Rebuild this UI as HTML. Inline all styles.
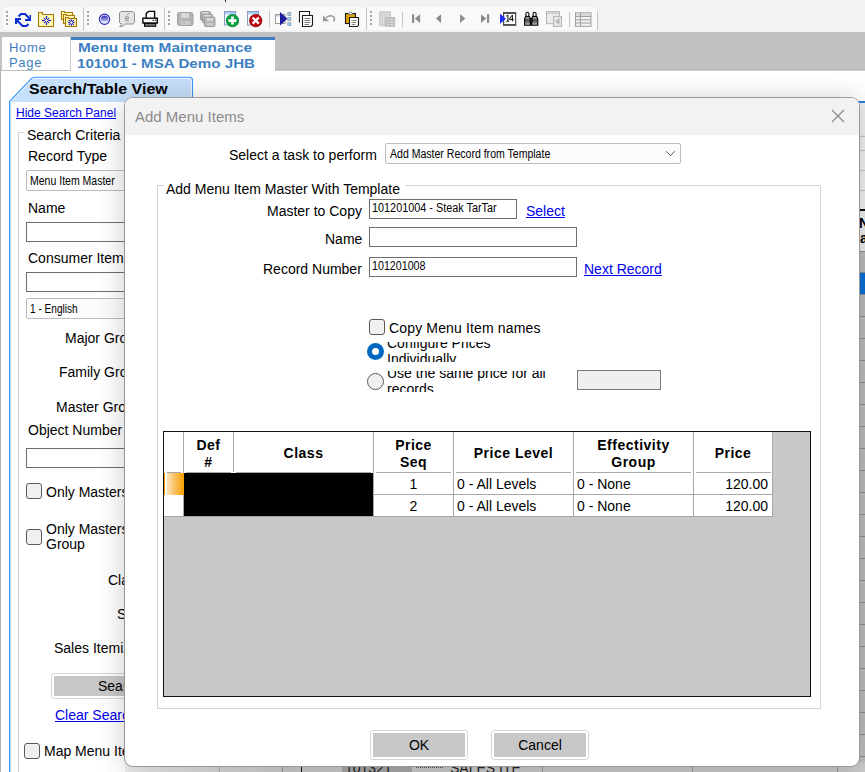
<!DOCTYPE html>
<html><head><meta charset="utf-8">
<style>
*{box-sizing:border-box}
html,body{margin:0;padding:0}
body{width:865px;height:772px;overflow:hidden;position:relative;background:#fff;font-family:"Liberation Sans",sans-serif;color:#000}
.a{position:absolute}
.t{position:absolute;white-space:pre;line-height:1}
.lnk{color:#0000ee;text-decoration:underline}
/* toolbar */
#tb{left:0;top:0;width:865px;height:32px;background:#f2f2f2}
.grp{position:absolute;top:7px;height:23px;background:#f9f9f9;border-radius:3px}
.grip{position:absolute;top:11px;width:3px;height:14px;background:radial-gradient(circle at 1.5px 1.5px,#9a9a9a 1.1px,transparent 1.3px) 0 0/3px 3.8px}
.sep{position:absolute;top:9px;width:1px;height:20px;background:#c8c8c8}
#band{left:0;top:32px;width:865px;height:39px;background:linear-gradient(#c2c2c2 0 37px,#b9b9b9 37px 38px,#d0d0d0 38px)}
/* modal */
#modal{left:124px;top:97px;width:736px;height:670px;background:#fff;border:1px solid #999;border-radius:9px;overflow:hidden;box-shadow:0 3px 30px rgba(0,0,0,.2)}
.cb{width:16px;height:16px;border:1px solid #5a5a5a;border-radius:3px;background:#f0f0f0}
.inp{height:20px;border:1px solid #6e6e6e;background:#fff}
.hl{position:absolute;height:1px;background:#a8a8a8}
.vl{position:absolute;width:1px;background:#a8a8a8}
.th{position:absolute;font-size:14px;font-weight:bold;text-align:center;line-height:16.5px;letter-spacing:.5px}
.td{position:absolute;font-size:14px;line-height:1;white-space:pre}
.btn{width:98px;height:30px;border:1px solid #d6d6d6;border-radius:3px;background:#fff;padding:2px}
.btn div{width:100%;height:100%;background:#c8c8c8}
.sx{transform-origin:0 0}
</style></head>
<body>
<!-- toolbar -->
<div id="tb" class="a">
  <div class="grp" style="left:3px;width:80px"></div>
  <div class="grp" style="left:84px;width:80px"></div>
  <div class="grp" style="left:165px;width:201px"></div>
  <div class="grp" style="left:366px;width:231px"></div>
<svg class="a" style="left:0;top:0" width="600" height="32" viewBox="0 0 600 32" shape-rendering="geometricPrecision">
<defs>
<linearGradient id="gc" x1="0" y1="0" x2="0" y2="1"><stop offset="0" stop-color="#2e2eb8"/><stop offset=".55" stop-color="#8c8ce0"/><stop offset="1" stop-color="#ffffff"/></linearGradient>
<linearGradient id="gb" x1="0" y1="0" x2="0" y2="1"><stop offset="0" stop-color="#888"/><stop offset="1" stop-color="#333"/></linearGradient>
</defs>
<!-- grips -->
<g fill="#a4a4a4">
<rect x="6" y="11" width="2" height="2"/><rect x="6" y="15" width="2" height="2"/><rect x="6" y="19" width="2" height="2"/><rect x="6" y="23" width="2" height="2"/>
<rect x="87" y="11" width="2" height="2"/><rect x="87" y="15" width="2" height="2"/><rect x="87" y="19" width="2" height="2"/><rect x="87" y="23" width="2" height="2"/>
<rect x="168" y="11" width="2" height="2"/><rect x="168" y="15" width="2" height="2"/><rect x="168" y="19" width="2" height="2"/><rect x="168" y="23" width="2" height="2"/>
<rect x="370" y="11" width="2" height="2"/><rect x="370" y="15" width="2" height="2"/><rect x="370" y="19" width="2" height="2"/><rect x="370" y="23" width="2" height="2"/>
</g>
<!-- separators -->
<g fill="#c4c4c4">
<rect x="83" y="8" width="1" height="22"/><rect x="164" y="8" width="1" height="22"/><rect x="269" y="11" width="1" height="16"/>
<rect x="366" y="8" width="1" height="22"/><rect x="402" y="12" width="1" height="15"/><rect x="569" y="12" width="1" height="15"/><rect x="597" y="11" width="1" height="19"/>
</g>
<!-- 1 refresh -->
<g stroke="#0a2fd6" stroke-width="2" fill="none" stroke-linejoin="miter">
<path d="M18.5 16.5L21 14H25L29 18"/>
<path d="M17.5 21L22.5 26H26.5L28.5 24"/>
</g>
<g fill="#0a2fd6"><path d="M29.5 15H31V21H25V19H27.5L28 18.2L29.5 18Z"/><path d="M15 18H21V20H18.5L19.5 21.2L17 22.5V24H15Z"/></g>
<!-- 2 folder -->
<path d="M38.5 12.5H42.5V14.5H53.5V26.5H38.5Z" fill="#fff8b0" stroke="#a87800" stroke-width="1.1"/>
<g fill="#1414d8"><rect x="45.9" y="16.0" width="1.2" height="2.8"/><rect x="45.9" y="22.2" width="1.2" height="2.8"/><rect x="42.0" y="19.9" width="2.8" height="1.2"/><rect x="48.2" y="19.9" width="2.8" height="1.2"/><rect x="43.9" y="17.9" width="1.2" height="1.2"/><rect x="45.0" y="19.0" width="1" height="1"/><rect x="43.9" y="21.9" width="1.2" height="1.2"/><rect x="45.0" y="21.0" width="1" height="1"/><rect x="47.9" y="17.9" width="1.2" height="1.2"/><rect x="47.0" y="19.0" width="1" height="1"/><rect x="47.9" y="21.9" width="1.2" height="1.2"/><rect x="47.0" y="21.0" width="1" height="1"/></g>
<!-- 3 folders -->
<path d="M61.5 11.5H64.5V12.5H72.5V19.5H61.5Z" fill="#fff8b0" stroke="#a87800" stroke-width="1.1"/>
<path d="M63.5 14.5H66.5V15.5H74.5V23.5H63.5Z" fill="#fff8b0" stroke="#a87800" stroke-width="1.1"/>
<path d="M65.5 17.5H68.5V18.5H76.5V26.5H65.5Z" fill="#fff8b0" stroke="#a87800" stroke-width="1.1"/>
<g fill="#1414d8"><rect x="70.7" y="19.3" width="1.2" height="1.8"/><rect x="70.7" y="23.9" width="1.2" height="1.8"/><rect x="68.1" y="21.9" width="1.8" height="1.2"/><rect x="72.7" y="21.9" width="1.8" height="1.2"/><rect x="68.7" y="19.9" width="1.2" height="1.2"/><rect x="69.8" y="21.0" width="1" height="1"/><rect x="68.7" y="23.9" width="1.2" height="1.2"/><rect x="69.8" y="23.0" width="1" height="1"/><rect x="72.7" y="19.9" width="1.2" height="1.2"/><rect x="71.8" y="21.0" width="1" height="1"/><rect x="72.7" y="23.9" width="1.2" height="1.2"/><rect x="71.8" y="23.0" width="1" height="1"/></g>
<!-- 4 circle -->
<circle cx="104.5" cy="19.2" r="5.1" fill="#fff" stroke="#2a2ac6" stroke-width="1.2"/><circle cx="104.5" cy="19.2" r="3.7" fill="url(#gc)"/>
<!-- 5 speech bubble -->
<path d="M121 11.5H133L134.5 13V22.5L133 24H125.2L122.4 26.6H119.6L122 24H121L119.5 22.5V13Z" fill="#e4e4e4" stroke="#8e8e8e" stroke-width="1"/>
<path d="M125.6 18.6H128.6V17.6Q128.6 16.6 127.6 16.6H126.6Q125.6 16.6 125.6 17.6V19.8Q125.6 20.6 126.6 20.6H128.8" fill="none" stroke="#8a8a8a" stroke-width="1"/>
<path d="M127.2 14.9L128.9 13.2" stroke="#8a8a8a" stroke-width="1"/>
<!-- 6 printer -->
<path d="M146.2 17.8V13.6L148.6 11.4H154.6V17.8" fill="#fff" stroke="#000" stroke-width="1.4"/>
<rect x="142.9" y="18.2" width="14.4" height="4.8" fill="#fff" stroke="#000" stroke-width="1.4"/>
<rect x="144.4" y="19.4" width="7" height=".8" fill="#e0e0e0"/>
<rect x="144.5" y="23.6" width="11.2" height="2.7" fill="#7a7a7a" stroke="#000" stroke-width="1"/>
<rect x="152.6" y="19.7" width="1.2" height="1.2" fill="#000"/><rect x="154.8" y="19.7" width="1.2" height="1.2" fill="#000"/>
<!-- 7 save -->
<rect x="177.5" y="12.5" width="15.5" height="13" rx="2" fill="#b4b4b4" stroke="#a0a0a0"/>
<rect x="181" y="13" width="8" height="5" fill="#d8d8d8"/>
<rect x="180.5" y="21" width="9.5" height="4" fill="#c8c8c8"/>
<rect x="183.5" y="22.3" width="1.2" height="1.2" fill="#999"/>
<!-- 8 multi save -->
<rect x="200.5" y="11.5" width="10" height="9" rx="1.5" fill="#b4b4b4" stroke="#9c9c9c"/>
<rect x="202.5" y="14" width="10" height="9" rx="1.5" fill="#b4b4b4" stroke="#9c9c9c"/>
<rect x="204.5" y="17" width="10.5" height="9.5" rx="1.5" fill="#b4b4b4" stroke="#9c9c9c"/>
<rect x="202.5" y="12" width="6" height="1.5" fill="#ddd"/><rect x="204.5" y="15" width="6" height="1.5" fill="#ddd"/>
<rect x="206.5" y="18" width="6.5" height="3" fill="#d6d6d6"/><rect x="206.5" y="23" width="7" height="3" fill="#c8c8c8"/>
<!-- 9 add -->
<rect x="224.5" y="11.5" width="11" height="13.5" fill="#f4f8ff" stroke="#8a9ab8"/>
<rect x="225" y="12" width="10" height="2.2" fill="#a6d0f4"/>
<circle cx="232.5" cy="20.6" r="6.2" fill="#00a33e" stroke="#057a33" stroke-width=".8"/>
<path d="M232.5 16.6V24.6M228.5 20.6H236.5" stroke="#fff" stroke-width="2.6"/>
<!-- 10 delete -->
<rect x="247.5" y="11.5" width="11" height="13.5" fill="#f4f8ff" stroke="#8a9ab8"/>
<rect x="248" y="12" width="10" height="2.2" fill="#a6d0f4"/>
<circle cx="255.7" cy="20.6" r="6.2" fill="#c0000c" stroke="#8a0000" stroke-width=".8"/>
<path d="M252.6 17.5L258.8 23.7M258.8 17.5L252.6 23.7" stroke="#fff" stroke-width="2.4"/>
<!-- 11 -->
<rect x="275.5" y="14.5" width="9.5" height="9" fill="#fff" stroke="#a09a90"/>
<rect x="276" y="15" width="8.5" height="1.6" fill="#b8d4ee"/>
<rect x="287.8" y="12.6" width="3" height="2.8" fill="#9cd0f8" stroke="#8a9aaa" stroke-width=".8"/>
<rect x="287.8" y="17.6" width="3" height="2.8" fill="#9cd0f8" stroke="#8a9aaa" stroke-width=".8"/>
<rect x="287.8" y="22.6" width="3" height="2.8" fill="#9cd0f8" stroke="#8a9aaa" stroke-width=".8"/>
<path d="M280 12L287.4 18.7L280 25.5Z" fill="#1c1c9c"/>
<!-- 12 copy -->
<path d="M299.5 22.5V11.5H309.5V15" fill="none" stroke="#1a1a1a" stroke-width="1.1"/>
<rect x="300" y="12" width="9" height="3" fill="#fff"/><rect x="300" y="12" width="2.5" height="10" fill="#fff"/>
<path d="M302.5 15.5H312.5V25L311 26.5H302.5Z" fill="#fff" stroke="#1a1a1a" stroke-width="1.1"/>
<path d="M304.5 18.5H310.5M304.5 20.5H310.5M304.5 22.5H310.5M304.5 24.5H309" stroke="#7a7a7a" stroke-width="1"/>
<!-- 13 undo -->
<path d="M326 17.5Q330 14.5 333.5 16.5Q335.5 18.5 333.5 21.5" fill="none" stroke="#9a9a9a" stroke-width="1.4"/>
<path d="M323 15.2V21.2H329Z" fill="#9a9a9a"/>
<!-- 14 paste -->
<rect x="345.5" y="13.5" width="10" height="10" fill="#e0a400" stroke="#1a1a1a" stroke-width="1.1"/>
<path d="M347.8 14.5L350.5 11.6L353.2 14.5Z" fill="#e8e8e8" stroke="#777" stroke-width=".9"/>
<path d="M349.5 17.5H358.5V25.3L357.3 26.5H349.5Z" fill="#fff" stroke="#1a1a1a" stroke-width="1.1"/>
<path d="M351.5 20.5H356.5M351.5 22.5H356.5M351.5 24.5H355.5" stroke="#8a8a8a" stroke-width="1"/>
<!-- 15 gray grid -->
<rect x="379" y="11.2" width="12" height="15" fill="#cdcdcd"/>
<g fill="#ececec"><rect x="380.5" y="13" width="1.3" height="1.3"/><rect x="383" y="13" width="1.3" height="1.3"/><rect x="385.5" y="13" width="1.3" height="1.3"/><rect x="388" y="13" width="1.3" height="1.3"/>
<rect x="380.5" y="15.5" width="1.3" height="1.3"/><rect x="383" y="15.5" width="1.3" height="1.3"/><rect x="385.5" y="15.5" width="1.3" height="1.3"/><rect x="388" y="15.5" width="1.3" height="1.3"/>
<rect x="380.5" y="18" width="1.3" height="1.3"/><rect x="383" y="18" width="1.3" height="1.3"/><rect x="380.5" y="20.5" width="1.3" height="1.3"/><rect x="383" y="20.5" width="1.3" height="1.3"/><rect x="380.5" y="23" width="1.3" height="1.3"/><rect x="383" y="23" width="1.3" height="1.3"/></g>
<rect x="385" y="17" width="10.2" height="9.9" fill="#bfbfbf"/>
<g fill="#e4e4e4"><rect x="387" y="19" width="1.2" height="1.2"/><rect x="387" y="21.5" width="1.2" height="1.2"/><rect x="387" y="24" width="1.2" height="1.2"/></g>
<g stroke="#d8d8d8" stroke-width="1"><path d="M389.5 19.6H393.5M389.5 22.1H393.5M389.5 24.6H393.5"/></g>
<!-- 16-19 nav -->
<g fill="#8c8c8c">
<rect x="412" y="14.2" width="2.2" height="8.7"/><path d="M420.1 14.2L414.8 18.6L420.1 22.9Z"/>
<path d="M441.1 14.2L435.9 18.6L441.1 22.9Z"/>
<path d="M460 14.2L465.4 18.6L460 22.9Z"/>
<path d="M481 14.2L486.3 18.6L481 22.9Z"/><rect x="487" y="14.2" width="2.2" height="8.7"/>
</g>
<!-- 20 calendar -->
<rect x="503.6" y="12.8" width="12" height="12.4" fill="#fff" stroke="#505050" stroke-width="1.2"/>
<rect x="503" y="12.2" width="13.2" height="1.8" fill="#505050"/>
<rect x="503" y="24" width="13.2" height="1.6" fill="#505050"/>
<path d="M506.2 16.2L507.9 15V21.2M506.3 21.2H509.3" fill="none" stroke="#111" stroke-width="1"/>
<path d="M512.4 21.4V15L509.2 19.4H513.8" fill="none" stroke="#111" stroke-width="1"/>
<path d="M500 13.7L506 18.75L500 23.8Z" fill="#1f2ef0"/>
<!-- 21 binoculars -->
<defs><linearGradient id="gb2" x1="0" y1="0" x2="0" y2="1"><stop offset="0" stop-color="#c8c8c8"/><stop offset=".45" stop-color="#4a4a4a"/><stop offset=".75" stop-color="#8a8a8a"/><stop offset="1" stop-color="#bdbdbd"/></linearGradient></defs>
<path d="M524.6 25.2V19L525.6 16.4H529.4L530.6 19V25.2Z" fill="url(#gb2)" stroke="#000" stroke-width="1.1" stroke-linejoin="round"/>
<path d="M531.6 25.2V19L532.6 16.4H536.6L537.8 19V25.2Z" fill="url(#gb2)" stroke="#000" stroke-width="1.1" stroke-linejoin="round"/>
<rect x="530" y="18.6" width="2.2" height="3.4" fill="#333" stroke="#000" stroke-width=".8"/>
<ellipse cx="527.4" cy="14.4" rx="1.6" ry="2.1" fill="#fff" stroke="#000" stroke-width="1.1"/>
<ellipse cx="534.6" cy="14.4" rx="1.6" ry="2.1" fill="#fff" stroke="#000" stroke-width="1.1"/>
<!-- 22 window -->
<rect x="546.5" y="11.7" width="13" height="12" fill="#ececec" stroke="#b4b4b4"/>
<rect x="547" y="12.2" width="12" height="2" fill="#d0d0d0"/>
<rect x="553.5" y="16.4" width="8" height="10" fill="#e6e6e6" stroke="#b4b4b4"/>
<path d="M559.5 18L555.3 21.4L559.5 24.8Z" fill="#b4b4b4"/>
<!-- 23 table -->
<rect x="575.5" y="12.8" width="15.5" height="13.5" fill="#f2f2f2" stroke="#9e9e9e"/>
<rect x="576" y="13.3" width="14.5" height="2.5" fill="#d6d6d6"/>
<path d="M580.5 13V26M576 16.5H591M576 19.8H591M576 23H591" stroke="#9e9e9e" stroke-width="1"/>
</svg>
</div>
<div class="a" style="left:225px;top:0;width:1px;height:2px;background:#223"></div>
<!-- tab band -->
<div id="band" class="a"></div>
<div class="a" style="left:2px;top:37px;width:69px;height:34px;background:#fff;border-bottom:1px solid #bdbdbd;border-right:1px solid #c9c9c9"></div>
<div class="t" style="left:9px;top:41px;font-size:13px;color:#3d80c2;letter-spacing:.7px">Home</div>
<div class="t" style="left:9px;top:56px;font-size:13px;color:#3d80c2;letter-spacing:.7px">Page</div>
<div class="a" style="left:71px;top:37px;width:204px;height:34px;background:#fff;border-top:3px solid #3d7fbf"></div>
<div class="t sx" style="left:78px;top:41px;font-size:13px;font-weight:bold;color:#3d80c2;transform:scaleX(1.187)">Menu Item Maintenance</div>
<div class="t sx" style="left:77px;top:57px;font-size:13px;font-weight:bold;color:#3d80c2;transform:scaleX(1.166)">101001 - MSA Demo JHB</div>

<!-- content -->
<div class="a" style="left:0;top:70px;width:1px;height:702px;background:#b4b4b4"></div>
<!-- background grid right -->
<div class="a" style="left:840px;top:101px;width:25px;height:671px;background:#bdbdbd"></div>
<div class="a" style="left:840px;top:101px;width:25px;height:2px;background:#2a7fd8"></div>
<div class="a" style="left:840px;top:103px;width:25px;height:106px;background:#f0f0f0"></div>
<div class="a" style="left:840px;top:136px;width:25px;height:1px;background:#c4c4c4"></div><div class="a" style="left:840px;top:150px;width:25px;height:1px;background:#c4c4c4"></div><div class="a" style="left:840px;top:170px;width:25px;height:1px;background:#c4c4c4"></div><div class="a" style="left:840px;top:190px;width:25px;height:1px;background:#c4c4c4"></div>
<div class="a" style="left:840px;top:209px;width:25px;height:2px;background:#111"></div>
<div class="a" style="left:840px;top:211px;width:25px;height:40px;background:#eeeeee"></div>
<div class="t" style="left:859px;top:216px;font-size:14px;font-weight:bold">N</div>
<div class="t" style="left:856px;top:231px;font-size:14px;font-weight:bold">la</div>
<div class="a" style="left:840px;top:251px;width:25px;height:1px;background:#8e8e8e"></div>
<div class="a" style="left:840px;top:272px;width:25px;height:1px;background:#8e8e8e"></div><div class="a" style="left:840px;top:294px;width:25px;height:1px;background:#8e8e8e"></div><div class="a" style="left:840px;top:316px;width:25px;height:1px;background:#8e8e8e"></div><div class="a" style="left:840px;top:338px;width:25px;height:1px;background:#8e8e8e"></div><div class="a" style="left:840px;top:360px;width:25px;height:1px;background:#8e8e8e"></div><div class="a" style="left:840px;top:382px;width:25px;height:1px;background:#8e8e8e"></div><div class="a" style="left:840px;top:404px;width:25px;height:1px;background:#8e8e8e"></div><div class="a" style="left:840px;top:426px;width:25px;height:1px;background:#8e8e8e"></div><div class="a" style="left:840px;top:448px;width:25px;height:1px;background:#8e8e8e"></div><div class="a" style="left:840px;top:470px;width:25px;height:1px;background:#8e8e8e"></div><div class="a" style="left:840px;top:492px;width:25px;height:1px;background:#8e8e8e"></div><div class="a" style="left:840px;top:514px;width:25px;height:1px;background:#8e8e8e"></div><div class="a" style="left:840px;top:536px;width:25px;height:1px;background:#8e8e8e"></div><div class="a" style="left:840px;top:558px;width:25px;height:1px;background:#8e8e8e"></div><div class="a" style="left:840px;top:580px;width:25px;height:1px;background:#8e8e8e"></div><div class="a" style="left:840px;top:602px;width:25px;height:1px;background:#8e8e8e"></div><div class="a" style="left:840px;top:624px;width:25px;height:1px;background:#8e8e8e"></div><div class="a" style="left:840px;top:646px;width:25px;height:1px;background:#8e8e8e"></div><div class="a" style="left:840px;top:668px;width:25px;height:1px;background:#8e8e8e"></div><div class="a" style="left:840px;top:690px;width:25px;height:1px;background:#8e8e8e"></div><div class="a" style="left:840px;top:712px;width:25px;height:1px;background:#8e8e8e"></div><div class="a" style="left:840px;top:734px;width:25px;height:1px;background:#8e8e8e"></div><div class="a" style="left:840px;top:756px;width:25px;height:1px;background:#8e8e8e"></div>
<div class="a" style="left:840px;top:273px;width:25px;height:21px;background:#0a6fd6"></div>
<!-- background bottom row -->
<div class="a" style="left:125px;top:762px;width:740px;height:10px;background:linear-gradient(90deg,#f0f0f0 0,#dedede 80px,#cccccc 170px)"></div><div class="a" style="left:219px;top:762px;width:1px;height:10px;background:#b4b4b4"></div>
<div class="a" style="left:282px;top:762px;width:1px;height:10px;background:#9a9a9a"></div>
<div class="a" style="left:301px;top:762px;width:1px;height:10px;background:#111"></div>
<div class="a" style="left:342px;top:762px;width:70px;height:10px;background:#a9a9a9"></div>
<div class="t" style="left:345px;top:761px;font-size:14px;color:#222">101321</div>
<div class="t" style="left:450px;top:761px;font-size:14px;color:#222">SALES ITE</div>
<div class="a" style="left:542px;top:762px;width:1px;height:10px;background:#9a9a9a"></div><div class="a" style="left:692px;top:762px;width:1px;height:10px;background:#9a9a9a"></div><div class="a" style="left:837px;top:762px;width:1px;height:10px;background:#9a9a9a"></div>
<div class="a" style="left:416px;top:767px;width:28px;height:1px;background:repeating-linear-gradient(90deg,#555 0 1px,transparent 1px 2px)"></div>

<!-- search/table tab -->
<svg class="a" style="left:0;top:70px" width="200" height="40">
<path d="M9.5 32V31.5L31 8.8Q33 7.3 35 7.3H189.5Q192.5 7.3 192.5 10.3V32" fill="#c6dffa" stroke="#3d98fb" stroke-width="1.1"/>
<path d="M11 32V32L31.8 10Q33.5 8.5 35.3 8.5H189Q191.3 8.5 191.3 10.8V32" fill="none" stroke="#f4f9ff" stroke-width="1"/>
</svg>
<div class="t sx" style="left:29px;top:82px;font-size:14px;font-weight:bold;transform:scaleX(1.14)">Search/Table View</div>
<div class="a" style="left:9px;top:101px;width:1px;height:671px;background:#3d98fb"></div>
<div class="a" style="left:10px;top:101px;width:1px;height:671px;background:#b6d8fc"></div>
<div class="t lnk" style="left:16px;top:107px;font-size:12px">Hide Search Panel</div>
<!-- fieldset -->
<div class="a" style="left:18px;top:132px;width:120px;height:650px;border:1px solid #d0d0d0;border-right:none"></div>
<div class="a" style="left:24px;top:126px;width:100px;height:14px;background:#fff"></div>
<div class="t" style="left:27px;top:128px;font-size:14px">Search Criteria</div>
<div class="t" style="left:28px;top:149px;font-size:14px">Record Type</div>
<div class="a" style="left:26px;top:170px;width:120px;height:21px;border:1px solid #bcbcbc;border-radius:2px;background:#fcfcfc"></div>
<div class="t sx" style="left:30px;top:175px;font-size:12px;transform:scaleX(.876)">Menu Item Master</div>
<div class="t" style="left:28px;top:201px;font-size:14px">Name</div>
<div class="a" style="left:26px;top:222px;width:120px;height:20px;border:1px solid #6e6e6e;background:#fff"></div>
<div class="t" style="left:28px;top:251px;font-size:14px">Consumer Item</div>
<div class="a" style="left:26px;top:272px;width:120px;height:20px;border:1px solid #6e6e6e;background:#fff"></div>
<div class="a" style="left:26px;top:298px;width:120px;height:21px;border:1px solid #bcbcbc;border-radius:2px;background:#fcfcfc"></div>
<div class="t sx" style="left:30px;top:303px;font-size:12px;transform:scaleX(.84)">1 - English</div>
<div class="t" style="left:65px;top:331px;font-size:14px">Major Group</div>
<div class="t" style="left:59px;top:365px;font-size:14px">Family Group</div>
<div class="t" style="left:56px;top:400px;font-size:14px">Master Group</div>
<div class="t" style="left:28px;top:423px;font-size:14px">Object Number</div>
<div class="a" style="left:26px;top:448px;width:120px;height:20px;border:1px solid #6e6e6e;background:#fff"></div>
<div class="a cb" style="left:26px;top:483px"></div>
<div class="t" style="left:46px;top:485px;font-size:14px">Only Masters</div>
<div class="a cb" style="left:26px;top:529px"></div>
<div class="t" style="left:46px;top:522px;font-size:14px;line-height:15px">Only Masters
Group</div>
<div class="t" style="left:108px;top:573px;font-size:14px">Class</div>
<div class="t" style="left:117px;top:607px;font-size:14px">S</div>
<div class="t" style="left:54px;top:641px;font-size:14px">Sales Itemizer</div>
<div class="a" style="left:51px;top:673px;width:100px;height:26px;border:1px solid #d6d6d6;border-radius:3px;background:#fff;padding:2px"><div style="width:100%;height:100%;background:#c8c8c8"></div></div>
<div class="t" style="left:98px;top:679px;font-size:14px">Search</div>
<div class="t lnk" style="left:55px;top:708px;font-size:14px">Clear Search</div>
<div class="a cb" style="left:24px;top:743px"></div>
<div class="t" style="left:44px;top:744px;font-size:14px">Map Menu Item</div>

<!-- MODAL -->
<div id="modal" class="a"><div class="a" style="left:-125px;top:-98px;width:865px;height:772px">
<div class="a" style="left:125px;top:98px;width:740px;height:37px;background:#f2f2f2"></div>
<div class="t" style="left:135px;top:109px;font-size:15px;color:#8a8a8a">Add Menu Items</div>
<svg class="a" style="left:830px;top:108px" width="16" height="16"><path d="M2 2L14 14M14 2L2 14" stroke="#8a8a8a" stroke-width="1.2"/></svg>

<div class="t" style="left:229px;top:148px;font-size:14px">Select a task to perform</div>
<div class="a" style="left:385px;top:143px;width:296px;height:21px;border:1px solid #bcbcbc;border-radius:2px;background:#fcfcfc"></div>
<div class="t sx" style="left:390px;top:148px;font-size:12px;transform:scaleX(.878)">Add Master Record from Template</div>
<svg class="a" style="left:665px;top:149px" width="12" height="9"><path d="M1.1 2.2L5.5 6.6L9.8 2.2" stroke="#555" stroke-width="1" fill="none"/></svg>

<!-- fieldset -->
<div class="a" style="left:157px;top:185px;width:664px;height:524px;border:1px solid #d4d4d4"></div>
<div class="a" style="left:164px;top:180px;width:241px;height:14px;background:#fff"></div>
<div class="t" style="left:166px;top:182px;font-size:14px">Add Menu Item Master With Template</div>
<div class="t" style="left:267px;top:204px;font-size:14px">Master to Copy</div>
<div class="a inp" style="left:369px;top:199px;width:148px"></div>
<div class="t sx" style="left:372px;top:202px;font-size:12px;transform:scaleX(.904)">101201004 - Steak TarTar</div>
<div class="t lnk" style="left:526px;top:204px;font-size:14px">Select</div>
<div class="t" style="left:325px;top:232px;font-size:14px">Name</div>
<div class="a inp" style="left:369px;top:227px;width:208px"></div>
<div class="t" style="left:263px;top:262px;font-size:14px">Record Number</div>
<div class="a inp" style="left:369px;top:257px;width:208px"></div>
<div class="t sx" style="left:372px;top:260px;font-size:12px;transform:scaleX(.89)">101201008</div>
<div class="t lnk" style="left:584px;top:262px;font-size:14px">Next Record</div>

<div class="a cb" style="left:369px;top:319px"></div>
<div class="t" style="left:389px;top:321px;font-size:14px;letter-spacing:.15px">Copy Menu Item names</div>
<div class="a" style="left:366px;top:342px;width:200px;height:20px;overflow:hidden">
  <div class="t" style="left:21px;top:-7px;font-size:14px;line-height:16px">Configure Prices
Individually</div>
</div>
<div class="a" style="left:367px;top:343px;width:17px;height:17px;border-radius:50%;background:#0067c0"></div>
<div class="a" style="left:372px;top:348px;width:7px;height:7px;border-radius:50%;background:#fff"></div>
<div class="a" style="left:366px;top:371px;width:200px;height:21px;overflow:hidden">
  <div class="t" style="left:21px;top:-6px;font-size:14px;line-height:16px">Use the same price for all
records</div>
</div>
<div class="a" style="left:367px;top:373px;width:17px;height:17px;border-radius:50%;background:#f0f0f0;border:1px solid #5a5a5a"></div>
<div class="a" style="left:577px;top:370px;width:84px;height:20px;border:1px solid #7a7a7a;background:#efefef"></div>

<!-- grid -->
<div class="a" style="left:163px;top:431px;width:648px;height:266px;border:1px solid #111;background:#c8c8c8"></div>
<div class="a" style="left:164px;top:432px;width:609px;height:84px;background:#fff"></div>
<div class="a" style="left:164px;top:473px;width:20px;height:22px;background:linear-gradient(90deg,#f5a000 0 1px,#fff 1px 2px,#fde6b8 3px,#f9c060 55%,#f7a000 100%)"></div>
<div class="a" style="left:184px;top:473px;width:190px;height:44px;background:#000"></div>
<div class="hl" style="left:167px;top:472px;width:14px"></div><div class="hl" style="left:186px;top:472px;width:45px"></div><div class="hl" style="left:236px;top:472px;width:135px"></div><div class="hl" style="left:376px;top:472px;width:75px"></div><div class="hl" style="left:456px;top:472px;width:115px"></div><div class="hl" style="left:576px;top:472px;width:115px"></div><div class="hl" style="left:696px;top:472px;width:75px"></div>
<div class="hl" style="left:374px;top:494px;width:399px"></div>
<div class="hl" style="left:164px;top:516px;width:609px"></div>
<div class="vl" style="left:183px;top:432px;height:41px"></div><div class="vl" style="left:183px;top:495px;height:21px"></div>
<div class="vl" style="left:233px;top:432px;height:40px"></div>
<div class="vl" style="left:373px;top:432px;height:84px"></div>
<div class="vl" style="left:453px;top:432px;height:84px"></div>
<div class="vl" style="left:573px;top:432px;height:84px"></div>
<div class="vl" style="left:693px;top:432px;height:84px"></div>
<div class="vl" style="left:772px;top:432px;height:84px"></div>
<div class="th" style="left:184px;top:437px;width:49px">Def<br>#</div>
<div class="th" style="left:234px;top:445px;width:139px">Class</div>
<div class="th" style="left:374px;top:437px;width:79px">Price<br>Seq</div>
<div class="th" style="left:454px;top:445px;width:119px">Price Level</div>
<div class="th" style="left:574px;top:437px;width:119px">Effectivity<br>Group</div>
<div class="th" style="left:694px;top:445px;width:78px">Price</div>
<div class="td" style="left:374px;top:477px;width:79px;text-align:center">1</div>
<div class="td" style="left:374px;top:499px;width:79px;text-align:center">2</div>
<div class="td" style="left:457px;top:477px">0 - All Levels</div>
<div class="td" style="left:457px;top:499px">0 - All Levels</div>
<div class="td" style="left:577px;top:477px">0 - None</div>
<div class="td" style="left:577px;top:499px">0 - None</div>
<div class="td" style="left:694px;top:477px;width:74px;text-align:right">120.00</div>
<div class="td" style="left:694px;top:499px;width:74px;text-align:right">120.00</div>

<!-- buttons -->
<div class="a btn" style="left:370px;top:730px"><div></div></div>
<div class="t" style="left:370px;top:738px;width:98px;text-align:center;font-size:14px">OK</div>
<div class="a btn" style="left:491px;top:730px"><div></div></div>
<div class="t" style="left:491px;top:738px;width:98px;text-align:center;font-size:14px">Cancel</div>
</div></div>
</body></html>
